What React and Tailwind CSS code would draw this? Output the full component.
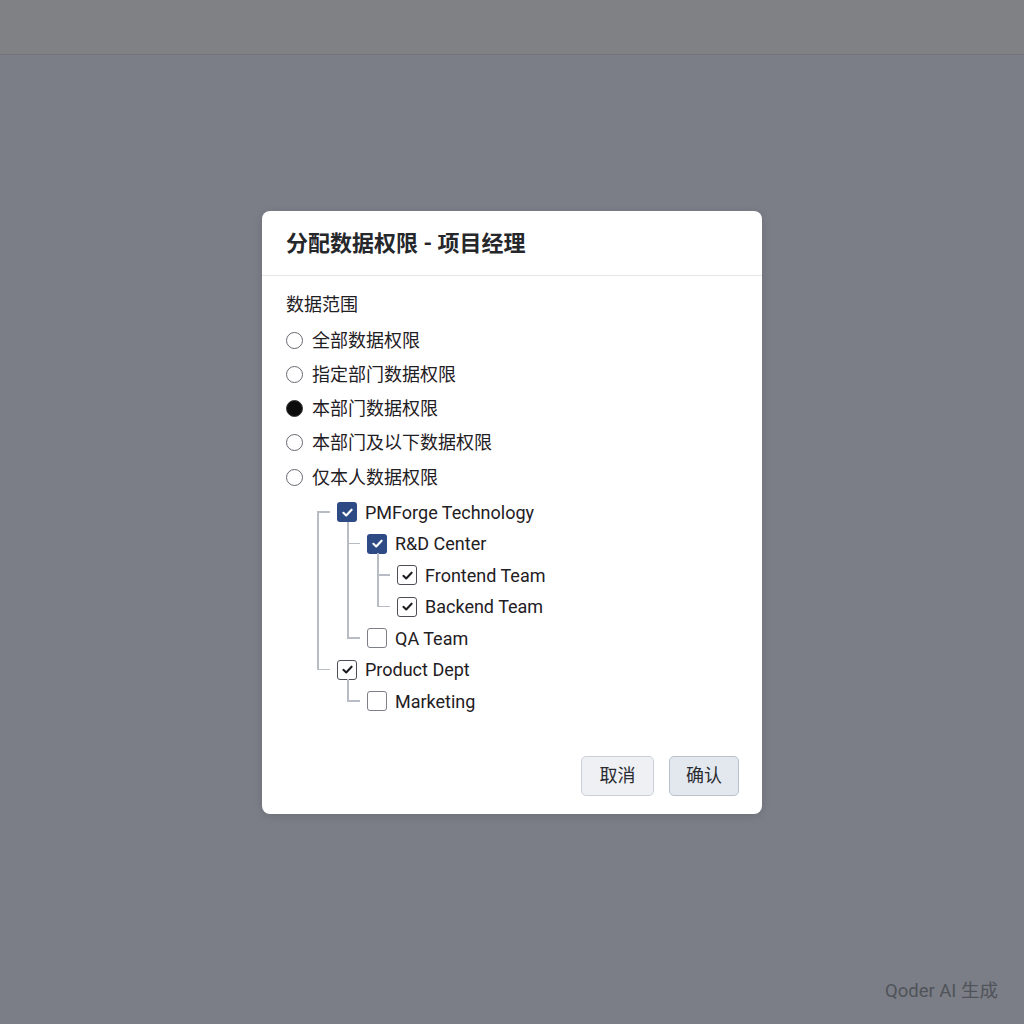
import React from 'react'

const FONT = { fontFamily: 'Roboto, "Noto Sans CJK SC", "Noto Sans", sans-serif' }

const RADIOS = [
  { label: '全部数据权限', on: false },
  { label: '指定部门数据权限', on: false },
  { label: '本部门数据权限', on: true },
  { label: '本部门及以下数据权限', on: false },
  { label: '仅本人数据权限', on: false },
]

const TREE = [
  {
    label: 'PMForge Technology',
    state: 'primary',
    children: [
      {
        label: 'R&D Center',
        state: 'primary',
        children: [
          { label: 'Frontend Team', state: 'checked' },
          { label: 'Backend Team', state: 'checked' },
        ],
      },
      { label: 'QA Team', state: 'empty' },
    ],
  },
  {
    label: 'Product Dept',
    state: 'checked',
    children: [{ label: 'Marketing', state: 'empty' }],
  },
]

function Check({ state }) {
  if (state === 'primary') {
    return (
      <span className="flex h-[20px] w-[20px] flex-shrink-0 items-center justify-center rounded-[3px] bg-[#2d4a84]">
        <svg width="13" height="13" viewBox="0 0 12 12" fill="none">
          <path d="M2.2 6.3 4.8 8.7 9.8 3.4" stroke="#fff" strokeWidth="2" strokeLinecap="round" strokeLinejoin="round" />
        </svg>
      </span>
    )
  }
  return (
    <span
      className={
        'flex h-[20px] w-[20px] flex-shrink-0 items-center justify-center rounded-[3px] border-[1.5px] bg-white ' +
        (state === 'checked' ? 'border-[#4b4e55]' : 'border-[#7d8088]')
      }
    >
      {state === 'checked' && (
        <svg width="13" height="13" viewBox="0 0 12 12" fill="none">
          <path d="M2.2 6.3 4.8 8.7 9.8 3.4" stroke="#1c1d21" strokeWidth="1.9" strokeLinecap="round" strokeLinejoin="round" />
        </svg>
      )}
    </span>
  )
}

// ── 树形节点（左侧连接线） ──
function TreeList({ nodes, root }) {
  return (
    <ul>
      {nodes.map((n, i) => {
        const first = i === 0
        const last = i === nodes.length - 1
        let lineCls = ''
        if (root && first) lineCls = 'top-[15.75px] bottom-0'
        else if (last) lineCls = first ? '-top-[6px] h-[21.75px]' : 'top-0 h-[15.75px]'
        else lineCls = (first ? '-top-[6px]' : 'top-0') + ' bottom-0'
        return (
          <li key={n.label} className="relative">
            <span className={'absolute left-0 w-[1.5px] bg-[#b8bcc4] ' + lineCls} />
            <span className="absolute left-0 top-[15px] h-[1.5px] w-[13px] bg-[#b8bcc4]" />
            <div className="flex h-[31.5px] items-center gap-[8px] pl-[20px]">
              <Check state={n.state} />
              <span className="text-[18px] text-[#1f2024]">{n.label}</span>
            </div>
            {n.children && (
              <div className="ml-[30px]">
                <TreeList nodes={n.children} />
              </div>
            )}
          </li>
        )
      })}
    </ul>
  )
}

export default function App() {
  return (
    <div className="relative flex h-[1024px] w-full flex-col bg-[#7b7e86]" style={FONT}>
      <div className="h-[55px] border-b border-[#72747a] bg-[#808184]" />

      <div className="flex justify-center pt-[156px]">
        <div className="flex w-[500px] flex-col rounded-[8px] bg-white shadow-[0_2px_10px_rgba(0,0,0,0.12)]">
          {/* 标题 */}
          <div className="flex h-[65px] items-center border-b border-[#e4e6ea] px-[24px]">
            <h2 className="text-[22px] font-bold text-[#26272b]">分配数据权限 - 项目经理</h2>
          </div>

          {/* 内容 */}
          <div className="px-[24px] pt-[17px]">
            <div className="h-[24px] text-[18px] leading-[24px] text-[#1f2024]">数据范围</div>
            <div className="mt-[6px]">
              {RADIOS.map((r) => (
                <div key={r.label} className="flex h-[34.25px] items-center gap-[9px]">
                  {r.on ? (
                    <span className="h-[17px] w-[17px] flex-shrink-0 rounded-full border-[1.5px] border-[#3a3a3a] bg-[#0c0c0d]" />
                  ) : (
                    <span className="h-[17px] w-[17px] flex-shrink-0 rounded-full border-[1.5px] border-[#66696f] bg-white" />
                  )}
                  <span className="text-[18px] text-[#1f2024]">{r.label}</span>
                </div>
              ))}
            </div>

            <div className="ml-[31px] mt-[2px]">
              <TreeList nodes={TREE} root />
            </div>
          </div>

          {/* 按钮 */}
          <div className="flex justify-end gap-[15px] pb-[18px] pr-[23px] pt-[39px]">
            <button className="h-[40px] w-[73px] rounded-[5px] border border-[#cbd0d8] bg-[#eef0f4] text-[18px] text-[#2a2c31]">
              取消
            </button>
            <button className="h-[40px] w-[70px] rounded-[5px] border border-[#b9c1cd] bg-[#e3e8ef] text-[18px] text-[#2a2c31]">
              确认
            </button>
          </div>
        </div>
      </div>

      <div className="absolute bottom-[18px] right-[26px] text-[18.5px] text-[#505359]">Qoder AI 生成</div>
    </div>
  )
}
